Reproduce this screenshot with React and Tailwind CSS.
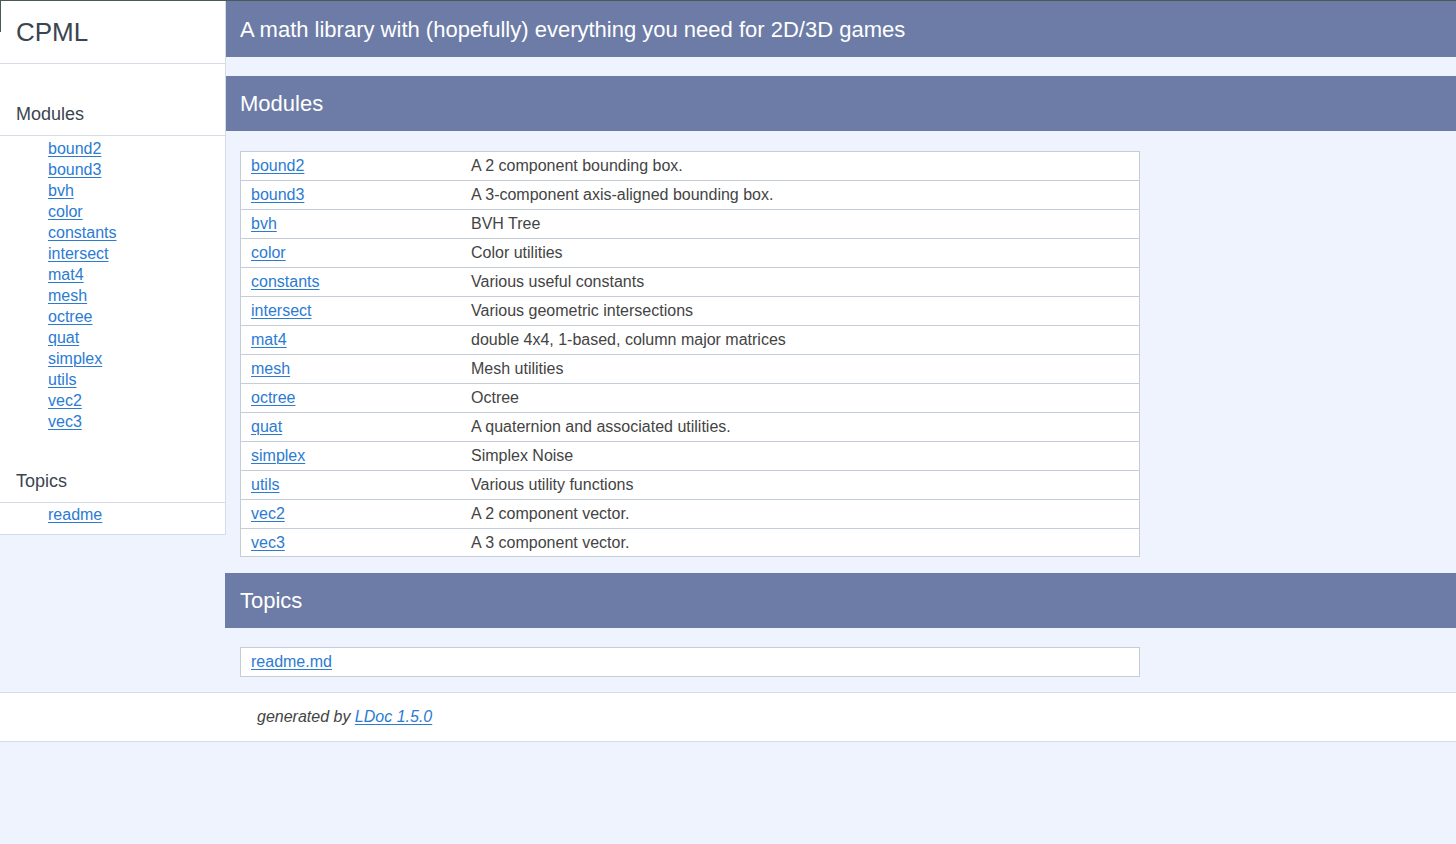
import React from "react";

const modules = [
  ["bound2", "A 2 component bounding box."],
  ["bound3", "A 3-component axis-aligned bounding box."],
  ["bvh", "BVH Tree"],
  ["color", "Color utilities"],
  ["constants", "Various useful constants"],
  ["intersect", "Various geometric intersections"],
  ["mat4", "double 4x4, 1-based, column major matrices"],
  ["mesh", "Mesh utilities"],
  ["octree", "Octree"],
  ["quat", "A quaternion and associated utilities."],
  ["simplex", "Simplex Noise"],
  ["utils", "Various utility functions"],
  ["vec2", "A 2 component vector."],
  ["vec3", "A 3 component vector."],
];

const linkCls = "text-[#2b7bd3] underline decoration-1 underline-offset-2";

export default function App() {
  return (
    <div
      className="relative min-h-[844px] w-[1456px] bg-[#eef3fd] text-[#444] border-t border-[#4b5858]"
      style={{ fontFamily: '"Liberation Sans", Arial, sans-serif' }}
    >
      <div className="absolute left-0 top-0 h-[31px] w-px bg-[#4b5858]" />
      <div className="flex items-start">
        {/* Sidebar */}
        <div className="w-[226px] shrink-0 bg-white border-r border-b border-[#d5dce6] pb-[9px]">
          <div className="h-[63px] border-b border-[#d5dce6] pl-4 pt-[16px] text-[26px] leading-[30px] text-[#3b4550]">
            CPML
          </div>
          <div className="mt-[40px] border-b border-[#d5dce6] pl-4 pb-[10px] text-[18px] leading-[21px] text-[#3b4550]">
            Modules
          </div>
          <ul className="mt-[2px] pl-12 text-[16px] leading-[21px]">
            {modules.map(([m]) => (
              <li key={m}>
                <a className={linkCls}>{m}</a>
              </li>
            ))}
          </ul>
          <div className="mt-[39px] border-b border-[#d5dce6] pl-4 pb-[10px] text-[18px] leading-[21px] text-[#3b4550]">
            Topics
          </div>
          <ul className="mt-[1px] pl-12 text-[16px] leading-[21px]">
            <li>
              <a className={linkCls}>readme</a>
            </li>
          </ul>
        </div>

        {/* Main */}
        <div className="flex-1">
          <div className="h-[56px] bg-[#6c7ca6] pl-[14px] flex items-center text-white text-[22px]">
            A math library with (hopefully) everything you need for 2D/3D games
          </div>
          <div className="mt-[19px] h-[55px] bg-[#6c7ca6] pl-[14px] flex items-center text-white text-[22px]">
            Modules
          </div>
          <div className="mt-[20px] ml-[14px] w-[900px] bg-white border border-[#c5cdd9] text-[16px]">
            {modules.map(([m, d], i) => (
              <div
                key={m}
                className={
                  i < modules.length - 1
                    ? "flex h-[29px] items-center border-b border-[#c5cdd9]"
                    : "flex h-[27px] items-center"
                }
              >
                <div className="w-[230px] pl-[10px]">
                  <a className={linkCls}>{m}</a>
                </div>
                <div className="flex-1">{d}</div>
              </div>
            ))}
          </div>
          <div className="mt-[16px] -ml-px h-[55px] bg-[#6c7ca6] pl-[15px] flex items-center text-white text-[22px]">
            Topics
          </div>
          <div className="mt-[19px] ml-[14px] w-[900px] h-[30px] bg-white border border-[#c5cdd9] text-[16px] flex items-center pl-[10px]">
            <a className={linkCls}>readme.md</a>
          </div>
        </div>
      </div>
      <div className="mt-[15px] h-[50px] bg-white border-y border-[#d5dce6] flex items-center pl-[257px] text-[16px] italic text-[#444]">
        generated by&nbsp;<a className={linkCls}>LDoc 1.5.0</a>
      </div>
    </div>
  );
}
